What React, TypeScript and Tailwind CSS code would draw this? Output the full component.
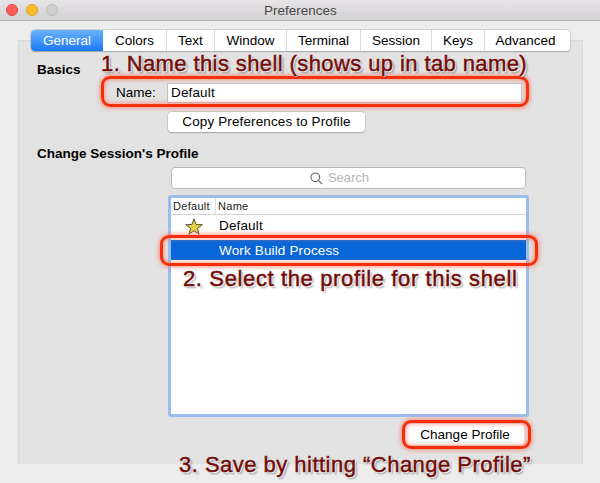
import React from "react";

const tabs = [
  { label: "General", box: "w-[72px] bg-gradient-to-b from-[#68b1fa] to-[#1578f8] text-white rounded-l-[4px]" },
  { label: "Colors", box: "w-[63px]" },
  { label: "Text", box: "w-[48px] border-l" },
  { label: "Window", box: "w-[72px] border-l" },
  { label: "Terminal", box: "w-[74px] border-l" },
  { label: "Session", box: "w-[71px] border-l" },
  { label: "Keys", box: "w-[53px] border-l" },
  { label: "Advanced", box: "w-[86px] border-l pr-1" },
];

function Ring({ className }: { className: string }) {
  return (
    <div
      className={`absolute rounded-[9px] border-[3px] border-[#f52f08] shadow-[0_0_4px_1px_rgba(255,110,90,0.75),inset_0_0_4px_1px_rgba(255,110,90,0.65)] ${className}`}
    />
  );
}

function Note({ className, children }: { className: string; children: React.ReactNode }) {
  return (
    <div
      className={`absolute whitespace-nowrap text-[22px] leading-[26px] text-[#720c08] [-webkit-text-stroke:0.5px_#720c08] [text-shadow:0_0_1px_#fff,0_0_2px_#fff,1px_1px_1px_#fff,2px_2px_2px_#00000066] ${className}`}
    >
      {children}
    </div>
  );
}

export default function App() {
  return (
    <div className="relative h-[483px] w-[600px] overflow-hidden bg-[#ececec] font-['Liberation_Sans',Arial,sans-serif] text-[13.5px] leading-4 text-black">
      <header className="flex h-[21px] items-center border-b border-[#b4b3b4] bg-gradient-to-b from-[#e6e4e6] to-[#d2d0d2]">
        <div className="flex w-[264px] gap-2 pl-[6px]">
          <span className="size-3 rounded-full border border-[#e2463f] bg-[#fc605b]" />
          <span className="size-3 rounded-full border border-[#dfa023] bg-[#fdbc2e]" />
          <span className="size-3 rounded-full border border-[#bfbebf] bg-[#d0cfd0]" />
        </div>
        <h1 className="pt-px text-[#4a494a]">Preferences</h1>
      </header>

      <main className="mx-[18px] mt-[19px] h-[424px] w-[565px] border-x border-t border-[#d9d9d9] bg-[#e2e2e2]">
        <nav className="-mt-[11px] ml-3 flex h-[21px] w-[539px] rounded-[4px] bg-white shadow-[0_0_0_0.5px_#b5b5b5,0_1px_1px_#999]">
          {tabs.map((t) => (
            <button key={t.label} className={`flex shrink-0 items-center justify-center border-[#dcdcdc] ${t.box}`}>
              {t.label}
            </button>
          ))}
        </nav>

        <section className="pl-[18px]">
          <h2 className="mt-[11px] text-[13.5px] font-bold">Basics</h2>
          <div className="mt-[5px] flex h-5 items-center pl-[79px]">
            <label className="w-[51px]">Name:</label>
            <div className="flex h-5 w-[355px] items-center border border-[#c2c2c2] bg-white pl-[3px] tracking-[0.15px]">Default</div>
          </div>
          <button className="ml-[131px] mt-[9px] flex h-5 w-[197px] items-center justify-center rounded-[4px] bg-white tracking-[0.12px] shadow-[0_0_0_0.5px_#b5b5b5,0_1px_1px_#999]">
            Copy Preferences to Profile
          </button>

          <h2 className="mt-[14px] text-[13.5px] font-bold">Change Session&apos;s Profile</h2>
          <div className="ml-[134px] mt-[5px] flex h-[22px] w-[355px] items-center justify-center gap-[5px] rounded-[4px] border border-[#b9b9b9] bg-white pr-[18px] text-[13px] text-[#b4b4b4]">
            <svg width="13" height="13" viewBox="0 0 13 13" fill="none" stroke="#666" strokeWidth="1.1">
              <circle cx="5.3" cy="5.3" r="4.3" />
              <path d="M8.4 8.4 12 12" />
            </svg>
            Search
          </div>

          <div className="ml-[131px] mt-[6px] h-[222px] w-[361px] rounded-[3px] border-[3px] border-[#9bbdeb] bg-white">
            <div className="flex h-[17px] items-center border-b border-[#d0d0d0] text-[11px] text-[#222]">
              <span className="w-[44px] pl-[2px] tracking-[0.3px]">Default</span>
              <span className="border-l border-[#ddd] pl-[2px] tracking-[0.3px]">Name</span>
            </div>
            <div className="flex h-[22px] items-center tracking-[0.15px]">
              <span className="flex w-[48px] justify-center pr-[3px]">
                <svg width="20" height="19" viewBox="0 0 20 19">
                  <path d="M10 1.8 12.1 7.5 18.3 7.7 13.4 11.4 15.1 17.2 10 13.8 4.9 17.2 6.6 11.4 1.7 7.7 7.9 7.5Z" fill="#e6d343" stroke="#55522e" strokeWidth="1" />
                </svg>
              </span>
              Default
            </div>
            <div className="mt-[3px] flex h-5 items-center bg-[#0867d8] pl-[48px] pt-px tracking-[0.15px] text-white">Work Build Process</div>
          </div>

          <button className="ml-[369px] mt-[7px] flex h-[21px] w-[118px] items-center justify-center rounded-[4px] bg-white">
            Change Profile
          </button>
        </section>
      </main>

      <Ring className="left-[101px] top-[76px] h-[31px] w-[428px]" />
      <Ring className="left-[160px] top-[235px] h-[31px] w-[378px]" />
      <Ring className="left-[402px] top-[420px] h-[29px] w-[129px]" />
      <Note className="left-[101px] top-[51px] tracking-[0.4px]">1. Name this shell (shows up in tab name)</Note>
      <Note className="left-[183px] top-[266px] tracking-[0.63px]">2. Select the profile for this shell</Note>
      <Note className="left-[179px] top-[452px] tracking-[0.48px]">3. Save by hitting “Change Profile”</Note>
    </div>
  );
}
